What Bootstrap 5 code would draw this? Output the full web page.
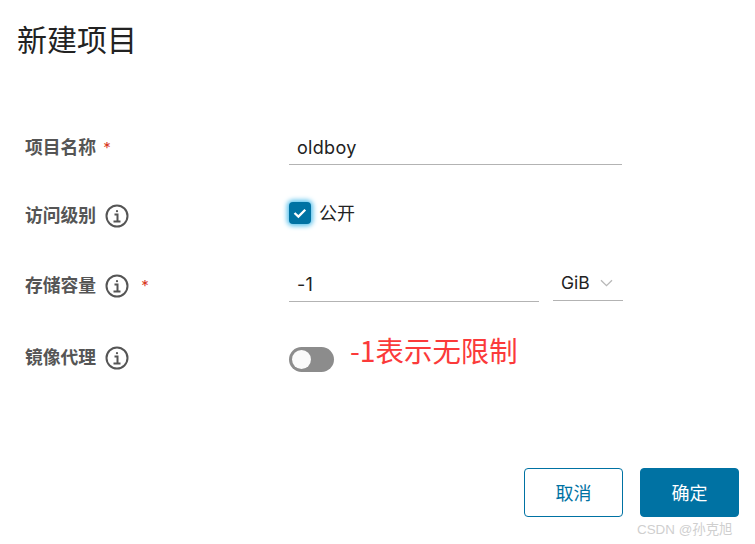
<!DOCTYPE html>
<html lang="zh">
<head>
<meta charset="utf-8">
<title>新建项目</title>
<link href="https://cdn.jsdelivr.net/npm/bootstrap@5.3.0/dist/css/bootstrap.min.css" rel="stylesheet">
<style>
html,body{height:100%;}
body{font-family:Inter,"Noto Sans CJK SC",sans-serif;background:#fff;color:#1f1f1f;overflow:hidden;}
.shell{width:755px;height:544px;position:relative;padding:0 16px 0 0;}
.heading{font-size:30px;font-weight:400;line-height:40px;margin:0;padding:20px 0 0 17px;color:#222;}
.formzone{padding:65px 0 0 25px;}
.frow{display:flex;align-items:center;}
.frow-a{height:44px;}
.frow-b{height:44px;margin-top:24px;}
.frow-c{height:44px;margin-top:26px;}
.frow-d{height:44px;margin-top:28px;}
.flabel{width:264px;flex:none;display:flex;align-items:center;font-size:17.8px;font-weight:700;color:#555;line-height:24px;padding-top:1px;}
.flabel-low{padding-top:2px;}
.req{color:#d8391f;font-size:15px;font-weight:400;line-height:14px;}
.req-a{margin:0 0 0 7px;}
.req-b{margin:0 0 0 12px;}
.infoi{width:24px;height:24px;margin-left:9px;flex:none;}
.tfield{border:0;border-bottom:1px solid #b3b3b3;border-radius:0;outline:0;background:transparent;font-size:18px;height:35px;padding:1px 8px 0;color:#222;font-family:inherit;display:block;letter-spacing:.3px;}
.tfield-w{width:333px;}
.tfield-n{width:250px;height:34px;margin-top:-1px;}
.unitbox{width:70px;margin-left:14px;height:34px;border-bottom:1px solid #b3b3b3;display:flex;align-items:center;padding-left:8px;font-size:17.5px;color:#222;gap:10px;margin-top:-3px;}
.checkwrap{display:flex;align-items:center;gap:8px;font-size:18px;margin:-5px 0 0;color:#222;}
.cbxtext{padding-top:1px;}
.cbx{width:22px;height:22px;border-radius:4px;background:#0072a3;box-shadow:0 0 5px 2px #57c0ec;display:flex;align-items:center;justify-content:center;}
.toggler{width:45px;height:25px;border-radius:13px;background:#8c8c8c;display:flex;align-items:center;padding-left:3px;margin-top:5px;}
.knob{width:19px;height:19px;border-radius:50%;background:#fafafa;}
.annot{font-size:28.4px;color:#fb3a3a;line-height:36px;margin-left:16px;margin-top:-15px;font-family:"Noto Sans CJK SC",sans-serif;}
.footbar{position:absolute;left:524px;top:468px;display:flex;gap:17px;}
.fbtn{width:99px;height:49px;border-radius:4px;font-size:18px;padding:1px 0 0;font-weight:400;}
.fbtn-o{background:#fff;border:1px solid #0072a3;color:#0072a3;}
.fbtn-s{background:#0072a3;border:1px solid #0072a3;color:#fff;}
.wmark{position:absolute;left:637px;top:520px;font-size:13.4px;line-height:20px;color:#cfcfcf;font-family:"Liberation Sans","Noto Sans CJK SC",sans-serif;white-space:nowrap;}
</style>
</head>
<body>
<div class="shell">
  <h1 class="heading">新建项目</h1>
  <form class="formzone">
    <div class="frow frow-a">
      <div class="flabel">项目名称<span class="req req-a">*</span></div>
      <input class="tfield tfield-w" value="oldboy">
    </div>
    <div class="frow frow-b">
      <div class="flabel flabel-low">访问级别
        <svg class="infoi" viewBox="0 0 24 24" fill="none" stroke="#555" stroke-width="2"><circle cx="12" cy="12" r="10.5"/><circle cx="12" cy="7.2" r="1.1" fill="#555" stroke="none"/><path d="M9.5 10.6h3v7M8.5 17.6h7"/></svg>
      </div>
      <label class="checkwrap">
        <span class="cbx"><svg width="16" height="16" viewBox="0 0 14 14" fill="none" stroke="#fff" stroke-width="2"><path d="M2.2 7l3.4 3.2 6-6"/></svg></span><span class="cbxtext">公开</span>
      </label>
    </div>
    <div class="frow frow-c">
      <div class="flabel flabel-low">存储容量
        <svg class="infoi" viewBox="0 0 24 24" fill="none" stroke="#555" stroke-width="2"><circle cx="12" cy="12" r="10.5"/><circle cx="12" cy="7.2" r="1.1" fill="#555" stroke="none"/><path d="M9.5 10.6h3v7M8.5 17.6h7"/></svg>
        <span class="req req-b">*</span>
      </div>
      <input class="tfield tfield-n" value="-1">
      <div class="unitbox">GiB<svg width="13" height="8" viewBox="0 0 13 8" fill="none" stroke="#b8b8b8" stroke-width="1.3"><path d="M1 1.2l5.5 5.5 5.5-5.5"/></svg></div>
    </div>
    <div class="frow frow-d">
      <div class="flabel">镜像代理
        <svg class="infoi" viewBox="0 0 24 24" fill="none" stroke="#555" stroke-width="2"><circle cx="12" cy="12" r="10.5"/><circle cx="12" cy="7.2" r="1.1" fill="#555" stroke="none"/><path d="M9.5 10.6h3v7M8.5 17.6h7"/></svg>
      </div>
      <div class="toggler"><span class="knob"></span></div>
      <div class="annot">-1表示无限制</div>
    </div>
  </form>
  <div class="footbar">
    <button type="button" class="btn fbtn fbtn-o">取消</button>
    <button type="button" class="btn fbtn fbtn-s">确定</button>
  </div>
  <div class="wmark">CSDN @孙克旭</div>
</div>
<script src="https://cdn.jsdelivr.net/npm/bootstrap@5.3.0/dist/js/bootstrap.bundle.min.js"></script>
</body>
</html>
